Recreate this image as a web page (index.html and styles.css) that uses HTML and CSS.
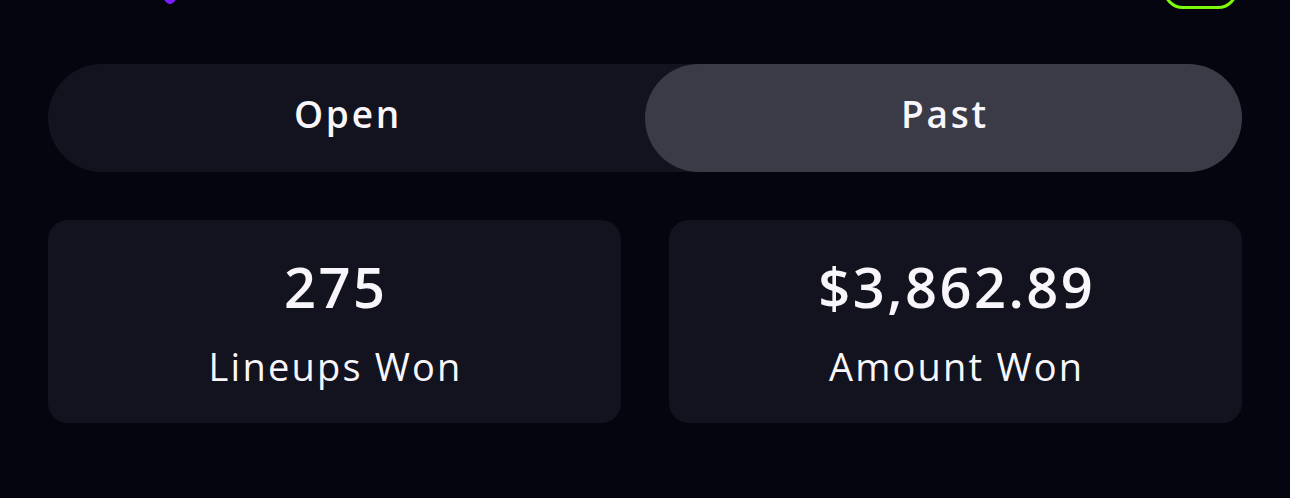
FILE: index.html
```html
<!DOCTYPE html>
<html lang="en">
<head>
  <meta charset="UTF-8">
  <title>My Lineups</title>
  <link rel="stylesheet" href="styles.css">
</head>
<body>
  <header class="topbar">
    <svg class="logo" width="16" height="30" viewBox="0 0 16 30">
      <path d="M0 0 H16 V20 C16 25 11 30 8 30 C5 30 0 25 0 20 Z" fill="#7b1cff"/>
    </svg>
    <div class="balance"></div>
  </header>
  <main class="page">
    <div class="tabs">
      <button class="tab">Open</button>
      <button class="tab active">Past</button>
    </div>
    <div class="stats">
      <div class="stat">
        <div class="stat-value">275</div>
        <div class="stat-label">Lineups Won</div>
      </div>
      <div class="stat">
        <div class="stat-value">$3,862.89</div>
        <div class="stat-label">Amount Won</div>
      </div>
    </div>
  </main>
</body>
</html>
```

FILE: styles.css
```css
body {
  margin: 0;
  padding: 0;
  background: #04050f;
  color: #f8f6fb;
  font-family: "Open Sans", Lato, sans-serif;
}
.topbar {
  height: 9px;
  display: flex;
  align-items: flex-end;
  justify-content: space-between;
  padding: 0 52px 0 162px;
}
.logo {
  display: block;
  margin-bottom: 5px;
}
.balance {
  width: 69px;
  height: 40px;
  border: 3px solid #7cfa0a;
  border-radius: 20px;
}
.page {
  padding: 55px 48px 0;
}
.tabs {
  display: grid;
  grid-template-columns: 1fr 1fr;
  height: 108px;
  background: #12131f;
  border-radius: 54px;
}
.tab {
  border: none;
  background: none;
  color: #f8f6fb;
  font-family: inherit;
  font-size: 37px;
  font-weight: 600;
  letter-spacing: 2.8px;
  line-height: 1;
  border-radius: 54px;
  padding: 0 0 10px 3px;
}
.tab.active {
  background: #3b3a47;
}
.stats {
  display: grid;
  grid-template-columns: 1fr 1fr;
  gap: 48px;
  margin-top: 48px;
}
.stat {
  height: 203px;
  background: #12131f;
  border-radius: 20px;
  display: flex;
  flex-direction: column;
  align-items: center;
  justify-content: center;
}
.stat-value {
  font-size: 56px;
  font-weight: 600;
  letter-spacing: 2.5px;
  line-height: 1;
  margin-top: -1px;
  padding-left: 2.5px;
}
.stat-label {
  font-size: 38px;
  letter-spacing: 2.2px;
  margin-top: 33px;
  line-height: 1;
  padding-left: 2.2px;
}
```
